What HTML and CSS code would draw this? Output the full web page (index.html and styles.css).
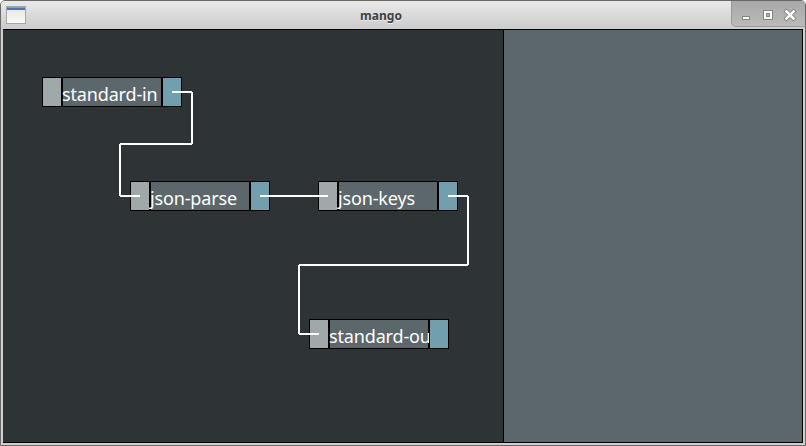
FILE: index.html
```html
<!DOCTYPE html>
<html lang="en">
<head>
<meta charset="utf-8">
<title>mango</title>
<link rel="stylesheet" href="styles.css">
</head>
<body>
<div class="window">
  <header class="titlebar">
    <svg class="app-icon" width="20" height="18" viewBox="0 0 20 18" shape-rendering="crispEdges">
      <defs><linearGradient id="sheet" x1="0" y1="0" x2="0" y2="1"><stop offset="0" stop-color="#e4e5e0"/><stop offset="1" stop-color="#fafaf9"/></linearGradient></defs>
      <rect width="20" height="18" fill="#a5a8a2"/>
      <rect x="1" y="1" width="18" height="16" fill="url(#sheet)"/>
      <rect x="1" y="1" width="18" height="1" fill="#8aa0c0"/>
      <rect x="1" y="2" width="18" height="2" fill="#4a78b5"/>
    </svg>
    <h1 class="title">mango</h1>
    <div class="controls">
      <svg width="75" height="26" viewBox="0 0 75 26">
        <g shape-rendering="crispEdges">
          <rect x="11" y="15" width="8" height="4" fill="#858585"/>
          <rect x="12" y="16" width="6" height="2" fill="#fff"/>
          <rect x="32" y="9" width="10" height="10" fill="#858585"/>
          <rect x="33" y="10" width="8" height="8" fill="#fff"/>
          <rect x="35" y="12" width="4" height="4" fill="#858585"/>
          <rect x="36" y="13" width="2" height="2" fill="#b5b5b5"/>
        </g>
        <path d="M55.5 10.5l7 7m0-7l-7 7" stroke="#858585" stroke-width="4.4" stroke-linecap="square"/>
        <path d="M55.5 10.5l7 7m0-7l-7 7" stroke="#fff" stroke-width="2.5" stroke-linecap="square"/>
      </svg>
    </div>
  </header>
  <main class="workspace">
    <section class="canvas">
      <div class="node" style="left:39px;top:47px"><span class="port in"></span><span class="label">standard-in</span><span class="port out"></span></div>
      <div class="node" style="left:127px;top:151px"><span class="port in"></span><span class="label">json-parse</span><span class="port out"></span></div>
      <div class="node" style="left:315px;top:151px"><span class="port in"></span><span class="label">json-keys</span><span class="port out"></span></div>
      <div class="node" style="left:306px;top:289px"><span class="port in"></span><span class="label">standard-ou</span><span class="port out"></span></div>
      <svg class="wires" width="500" height="412" viewBox="3 30 500 412">
        <path d="M172 92H192M192 92V144M192 144H120M120 144V196M120 196H140"/>
        <path d="M260 196H328"/>
        <path d="M448 196H468M468 196V265M468 265H299M299 265V334M299 334H319"/>
      </svg>
    </section>
    <aside class="panel"></aside>
  </main>
</div>
</body>
</html>
```
FILE: styles.css
```css
* { box-sizing: border-box; }
body {
  margin: 0;
  background: #fff;
  overflow: hidden;
}
.window {
  display: flex;
  flex-direction: column;
  width: 806px;
  height: 446px;
  border: 1px solid #686868;
  border-radius: 5px 5px 0 0;
  background: #cfcfcf;
  overflow: hidden;
}
.titlebar {
  display: flex;
  align-items: flex-start;
  flex: none;
  height: 28px;
  background: linear-gradient(#e9e9e9, #cecece 90%);
}
.app-icon {
  display: block;
  margin: 5px 0 0 5px;
}
.title {
  flex: 1;
  margin: 0 0 0 5px;
  font: bold 12px/30px "Noto Sans", sans-serif;
  color: #404040;
  text-align: center;
  text-shadow: 0 1px #eee;
}
.controls {
  width: 74px;
  height: 26px;
  background: linear-gradient(#a8a8a8, #bababa);
  border: solid #999;
  border-width: 0 0 1px 1px;
  border-radius: 0 0 0 5px;
}
.controls svg {
  display: block;
  margin-left: -1px;
  fill: none;
}
.workspace {
  display: flex;
  flex: none;
  width: 800px;
  height: 414px;
  margin-left: 2px;
  border: 1px solid #000;
  border-left: 0;
}
.canvas {
  position: relative;
  width: 500px;
  background: #2e3436;
  overflow: hidden;
}
.panel {
  flex: 1;
  background: #5c676b;
  border-left: 1px solid #000;
}
.node {
  position: absolute;
  display: flex;
  width: 140px;
  height: 30px;
}
.port {
  width: 20px;
  border: 1px solid #000;
}
.in { background: #a0a8aa; }
.out { background: #729fae; }
.label {
  width: 100px;
  background: #5c676b;
  box-shadow: inset 0 0 0 1px #000;
  color: #fff;
  font: 18px/34px "Noto Sans", sans-serif;
  letter-spacing: -0.15px;
  white-space: nowrap;
  clip-path: inset(0 0 0 -2px);
}
.wires {
  position: absolute;
  inset: 0;
  fill: none;
  stroke: #fff;
  stroke-width: 2;
}
```
